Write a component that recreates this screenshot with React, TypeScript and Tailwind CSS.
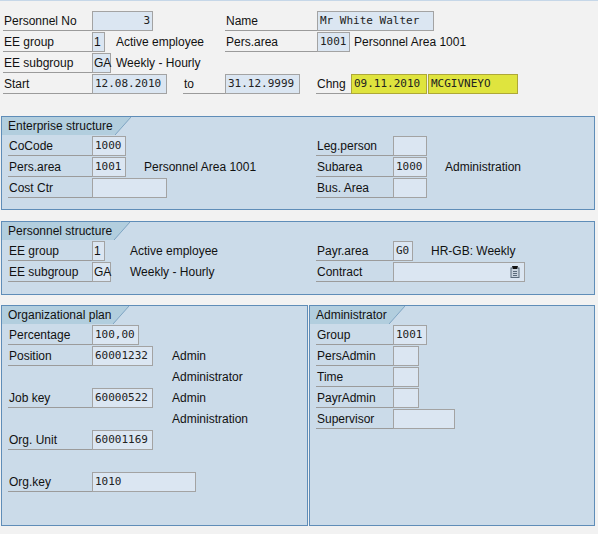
import React from 'react';

const sans = { fontFamily: '"Liberation Sans", Arial, sans-serif' };

type LblProps = { w: string; children?: React.ReactNode; line?: boolean };

// label cell with the grey underline SAP draws under captions
const Lbl: React.FC<LblProps> = ({ w, children, line = true }) => (
  <div className={`${w} h-[20px] shrink-0 flex items-center pl-[1px] text-[12px] text-[#111] ${line ? 'border-b border-[#9b9b9b]' : ''}`}>
    {children}
  </div>
);

type FldProps = {
  w: string;
  children?: React.ReactNode;
  mono?: boolean;
  right?: boolean;
  yellow?: boolean;
};

const Fld: React.FC<FldProps> = ({ w, children, mono = true, right, yellow }) => (
  <div
    className={`${w} h-[20px] shrink-0 flex items-center border whitespace-nowrap ${
      right ? 'justify-end' : ''
    } ${yellow ? 'bg-[#dfe43e] border-[#aea838]' : 'bg-[#dbe6f2] border-[#a3a3a3]'} ${
      mono
        ? 'px-[2px] overflow-hidden font-["DejaVu_Sans_Mono",monospace] text-[11px] text-[#222]'
        : 'pl-[1px] text-[12px] text-[#111]'
    }`}
  >
    {children}
  </div>
);

const Txt: React.FC<{ ml: string; children: React.ReactNode }> = ({ ml, children }) => (
  <span className={`${ml} text-[12px] text-[#111] whitespace-nowrap`}>{children}</span>
);

const Row: React.FC<{ children: React.ReactNode }> = ({ children }) => (
  <div className="flex items-center h-[20px] mb-[1px]">{children}</div>
);

const Group: React.FC<{ title: string; w: string; pb: string; children: React.ReactNode }> = ({
  title,
  w,
  pb,
  children
}) => (
  <div className={`${w} ${pb} border border-[#5f8db8] bg-[#cbdbe9]`}>
    <div className="flex h-[18px]">
      <div className="bg-[#b2cede] pl-[6px] pr-[2px] flex items-center text-[12px] text-[#111] whitespace-nowrap">
        {title}
      </div>
      <svg width="16" height="18" viewBox="0 0 16 18" className="shrink-0">
        <polygon points="0,0 16,0 0,18" fill="#b2cede" />
        <line x1="16" y1="0" x2="0" y2="18" stroke="#7ea4c2" strokeWidth="1" />
      </svg>
    </div>
    <div className="pt-[1px] pl-[6px]">{children}</div>
  </div>
);

const F4Icon = () => (
  <svg width="10" height="12" viewBox="0 0 10 12">
    <rect x="1" y="2" width="8" height="9.5" fill="#c9d3de" stroke="#5a6a7a" strokeWidth="1" />
    <path d="M2 0 H8 L7 3 H3 Z" fill="#111" />
    <line x1="3" y1="5.5" x2="7" y2="5.5" stroke="#5a6a7a" />
    <line x1="3" y1="7.5" x2="7" y2="7.5" stroke="#5a6a7a" />
    <line x1="3" y1="9.5" x2="7" y2="9.5" stroke="#5a6a7a" />
  </svg>
);

export default function App() {
  return (
    <div className="w-[598px] min-h-[534px] bg-[#f2f2f2] overflow-hidden" style={sans}>
      <div className="h-[1px] bg-[#c6d7e8]" />

      {/* Header */}
      <div className="pt-[10px] pl-[3px]">
        <Row>
          <Lbl w="w-[89px]">Personnel No</Lbl>
          <Fld w="w-[61px]" right>3</Fld>
          <div className="w-[72px] shrink-0" />
          <Lbl w="w-[92px]">Name</Lbl>
          <Fld w="w-[117px]">Mr White Walter</Fld>
        </Row>
        <Row>
          <Lbl w="w-[89px]">EE group</Lbl>
          <Fld w="w-[13px]" mono={false}>1</Fld>
          <div className="w-[120px] shrink-0 flex">
            <Txt ml="ml-[11px]">Active employee</Txt>
          </div>
          <Lbl w="w-[92px]">Pers.area</Lbl>
          <Fld w="w-[33px]">1001</Fld>
          <Txt ml="ml-[4px]">Personnel Area 1001</Txt>
        </Row>
        <Row>
          <Lbl w="w-[89px]">EE subgroup</Lbl>
          <Fld w="w-[19px]" mono={false}>GA</Fld>
          <Txt ml="ml-[5px]">Weekly - Hourly</Txt>
        </Row>
        <Row>
          <Lbl w="w-[89px]">Start</Lbl>
          <Fld w="w-[75px]">12.08.2010</Fld>
          <div className="w-[16px] shrink-0" />
          <Lbl w="w-[42px]">to</Lbl>
          <Fld w="w-[75px]">31.12.9999</Fld>
          <div className="w-[16px] shrink-0" />
          <Lbl w="w-[35px]">Chng</Lbl>
          <Fld w="w-[76px]" yellow>09.11.2010</Fld>
          <div className="w-[1px] shrink-0" />
          <Fld w="w-[90px]" yellow>MCGIVNEYO</Fld>
        </Row>
      </div>

      <div className="pl-[1px] mt-[22px] flex flex-col">
        {/* Enterprise structure */}
        <Group title="Enterprise structure" w="w-[594px]" pb="pb-[10px]">
          <Row>
            <div className="w-[308px] shrink-0 flex items-center">
              <Lbl w="w-[84px]">CoCode</Lbl>
              <Fld w="w-[34px]">1000</Fld>
            </div>
            <Lbl w="w-[77px]">Leg.person</Lbl>
            <Fld w="w-[34px]" />
          </Row>
          <Row>
            <div className="w-[308px] shrink-0 flex items-center">
              <Lbl w="w-[84px]">Pers.area</Lbl>
              <Fld w="w-[34px]">1001</Fld>
              <Txt ml="ml-[18px]">Personnel Area 1001</Txt>
            </div>
            <Lbl w="w-[77px]">Subarea</Lbl>
            <Fld w="w-[34px]">1000</Fld>
            <Txt ml="ml-[18px]">Administration</Txt>
          </Row>
          <Row>
            <div className="w-[308px] shrink-0 flex items-center">
              <Lbl w="w-[84px]">Cost Ctr</Lbl>
              <Fld w="w-[75px]" />
            </div>
            <Lbl w="w-[77px]">Bus. Area</Lbl>
            <Fld w="w-[34px]" />
          </Row>
        </Group>

        {/* Personnel structure */}
        <div className="mt-[11px]">
          <Group title="Personnel structure" w="w-[594px]" pb="pb-[11px]">
            <Row>
              <div className="w-[308px] shrink-0 flex items-center">
                <Lbl w="w-[84px]">EE group</Lbl>
                <Fld w="w-[13px]" mono={false}>1</Fld>
                <Txt ml="ml-[25px]">Active employee</Txt>
              </div>
              <Lbl w="w-[77px]">Payr.area</Lbl>
              <Fld w="w-[20px]">G0</Fld>
              <Txt ml="ml-[18px]">HR-GB: Weekly</Txt>
            </Row>
            <Row>
              <div className="w-[308px] shrink-0 flex items-center">
                <Lbl w="w-[84px]">EE subgroup</Lbl>
                <Fld w="w-[19px]" mono={false}>GA</Fld>
                <Txt ml="ml-[19px]">Weekly - Hourly</Txt>
              </div>
              <Lbl w="w-[77px]">Contract</Lbl>
              <Fld w="w-[132px]" right>
                <span className="mr-[2px] flex">
                  <F4Icon />
                </span>
              </Fld>
            </Row>
          </Group>
        </div>

        {/* Organizational plan + Administrator */}
        <div className="mt-[10px] flex gap-[1px]">
          <Group title="Organizational plan" w="w-[307px]" pb="pb-[32px]">
            <Row>
              <Lbl w="w-[84px]">Percentage</Lbl>
              <Fld w="w-[47px]">100,00</Fld>
            </Row>
            <Row>
              <Lbl w="w-[84px]">Position</Lbl>
              <Fld w="w-[61px]">60001232</Fld>
              <Txt ml="ml-[19px]">Admin</Txt>
            </Row>
            <Row>
              <div className="w-[164px] shrink-0" />
              <Txt ml="ml-0">Administrator</Txt>
            </Row>
            <Row>
              <Lbl w="w-[84px]">Job key</Lbl>
              <Fld w="w-[61px]">60000522</Fld>
              <Txt ml="ml-[19px]">Admin</Txt>
            </Row>
            <Row>
              <div className="w-[164px] shrink-0" />
              <Txt ml="ml-0">Administration</Txt>
            </Row>
            <Row>
              <Lbl w="w-[84px]">Org. Unit</Lbl>
              <Fld w="w-[61px]">60001169</Fld>
            </Row>
            <Row>
              <div />
            </Row>
            <Row>
              <Lbl w="w-[84px]">Org.key</Lbl>
              <Fld w="w-[104px]">1010</Fld>
            </Row>
          </Group>

          <Group title="Administrator" w="w-[286px]" pb="pb-[32px]">
            <Row>
              <Lbl w="w-[77px]">Group</Lbl>
              <Fld w="w-[34px]">1001</Fld>
            </Row>
            <Row>
              <Lbl w="w-[77px]">PersAdmin</Lbl>
              <Fld w="w-[26px]" />
            </Row>
            <Row>
              <Lbl w="w-[77px]">Time</Lbl>
              <Fld w="w-[26px]" />
            </Row>
            <Row>
              <Lbl w="w-[77px]">PayrAdmin</Lbl>
              <Fld w="w-[26px]" />
            </Row>
            <Row>
              <Lbl w="w-[77px]">Supervisor</Lbl>
              <Fld w="w-[62px]" />
            </Row>
          </Group>
        </div>
      </div>
    </div>
  );
}
